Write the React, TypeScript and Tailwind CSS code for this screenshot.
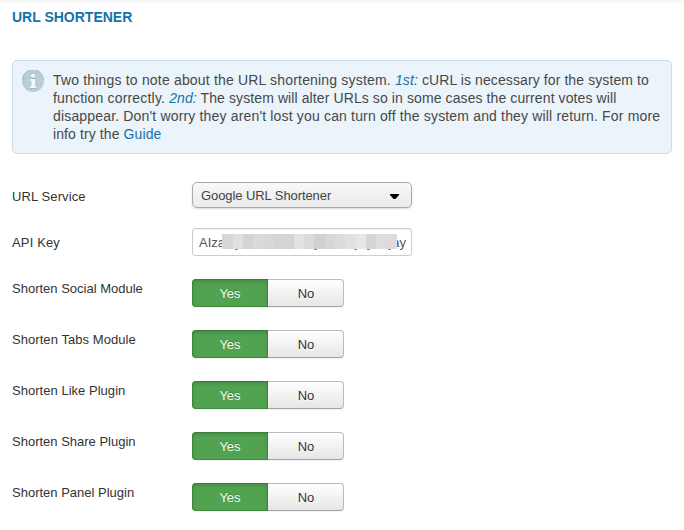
import type { ReactNode } from "react";

const noticeLink = "text-[#1372ab]";

const mosaic = [
  { w: "w-[11px]", c: "bg-[#d8d7d7]" },
  { w: "w-[10px]", c: "bg-[#dfe1e1]" },
  { w: "w-[10px]", c: "bg-[#d7d3d5]" },
  { w: "w-[10px]", c: "bg-[#dadadb]" },
  { w: "w-[10px]", c: "bg-[#d6d8da]" },
  { w: "w-[21px]", c: "bg-[#d3d4d4]" },
  { w: "w-[10px]", c: "bg-[#e2e2e3]" },
  { w: "w-[10px]", c: "bg-[#dcdada]" },
  { w: "w-[11px]", c: "bg-[#d0d1d4]" },
  { w: "w-[10px]", c: "bg-[#d8d7d8]" },
  { w: "w-[10px]", c: "bg-[#d9dce0]" },
  { w: "w-[11px]", c: "bg-[#e2e1e0]" },
  { w: "w-[10px]", c: "bg-[#e5e7ea]" },
  { w: "w-[10px]", c: "bg-[#d8d6d5]" },
  { w: "w-[11px]", c: "bg-[#dbdde1]" },
  { w: "w-[10px]", c: "bg-[#dedcdb]" },
];

const descenders = ["left-[13px]", "left-[92px]", "left-[132px]", "left-[145px]", "left-[166px]"];

const switches = [
  { label: "Shorten Social Module", tracking: "tracking-normal" },
  { label: "Shorten Tabs Module", tracking: "tracking-[0.06px]" },
  { label: "Shorten Like Plugin", tracking: "tracking-[0.03px]" },
  { label: "Shorten Share Plugin", tracking: "tracking-normal" },
  { label: "Shorten Panel Plugin", tracking: "tracking-normal" },
];

function Field({
  label,
  className,
  labelClass,
  children,
}: {
  label: string;
  className: string;
  labelClass: string;
  children: ReactNode;
}) {
  return (
    <div className={`flex items-start ${className}`}>
      <label className={`w-[180px] shrink-0 leading-[18px] whitespace-nowrap ${labelClass}`}>{label}</label>
      {children}
    </div>
  );
}

function YesNo() {
  return (
    <div className="flex h-7 w-[152px] rounded text-center shadow-[0_1px_2px_rgba(0,0,0,0.06)]">
      <button className="w-[76px] rounded-l-[4px] bg-[#51a351] pt-px leading-[28px] text-[#f4faf4] [text-shadow:0_-1px_0_rgba(0,0,0,0.2)] shadow-[inset_0_0_0_1px_rgba(30,90,30,0.3),inset_0_2px_4px_rgba(0,0,0,0.18)]">
        Yes
      </button>
      <button className="w-[76px] rounded-r-[4px] border border-l-0 border-[#bbb] border-b-[#a2a2a2] bg-linear-to-b from-white to-[#e6e6e6] pl-px leading-[27px] text-[#333] [text-shadow:0_1px_1px_rgba(255,255,255,0.75)]">
        No
      </button>
    </div>
  );
}

function Notice() {
  return (
    <div className="mt-[33px] flex h-[94px] rounded-[5px] border border-[#cfdce3] bg-[#ebf4fa] text-[14px] leading-[18px] text-[#484848]">
      <svg className="mt-[9px] ml-[9px] shrink-0" width="22" height="22" viewBox="0 0 22 22">
        <circle cx="11" cy="11" r="11" fill="#b9cdd9" />
        <path d="M.6 10A10.4 10.4 0 0 1 21.4 10" fill="none" stroke="#9db9c8" strokeWidth="1" />
        <path d="M9 3h4v1H9z M8 8h5v1H8z M8 18h6v1H8z" fill="#9db6c5" />
        <circle cx="11" cy="5.5" r="2" fill="#f1f8fc" />
        <path d="M8 9h5v7.5h1.3V18H7.7v-1.5H9.5v-6H8z" fill="#f1f8fc" />
      </svg>
      <p className="ml-[9px] pt-[10px] tracking-[0.1px] whitespace-nowrap">
        <span className="block">
          <span className="tracking-[0.18px]">Two things to note about the URL shortening system. </span>
          <em className={noticeLink}>1st:</em> cURL is necessary for the system to
        </span>
        <span className="block">
          <span className="tracking-[0.18px]">function correctly. </span>
          <em className={noticeLink}>2nd:</em> The system will alter URLs so in some cases the current votes will
        </span>
        <span className="block tracking-[0.165px]">
          disappear. Don't worry they aren't lost you can turn off the system and they will return. For more
        </span>
        <span className="block">
          info try the <a className={noticeLink}>Guide</a>
        </span>
      </p>
    </div>
  );
}

export default function App() {
  return (
    <main className="h-[530px] w-[684px] overflow-hidden bg-white bg-linear-to-b from-[#f4f4f4] to-white bg-[length:100%_4px] bg-no-repeat px-3 pt-2 font-['Liberation_Sans',Arial,sans-serif] text-[13px] text-[#333]">
      <h1 className="text-[14px] leading-[19px] font-bold text-[#1372ab]">URL SHORTENER</h1>
      <Notice />
      <Field label="URL Service" className="mt-7 h-[46px]" labelClass="pt-1.5 tracking-[0.1px]">
        <div className="flex h-[25.5px] w-[220px] items-center justify-between rounded-[5px] border border-[#a9a9a9] bg-linear-to-b from-[#fafafa] via-[#f0f0f0] to-[#ececec] pr-3 pl-2 text-[#444] shadow-[0_1px_2px_rgba(0,0,0,0.15)]">
          <span className="pt-[2px] tracking-[-0.08px]">Google URL Shortener</span>
          <svg className="mt-[3px]" width="9" height="5" viewBox="0 0 9 5">
            <path d="M0 0h9v1L5.5 5h-2L0 1z" fill="#000" />
          </svg>
        </div>
      </Field>
      <Field label="API Key" className="h-[51px]" labelClass="pt-1.5 tracking-[0.15px]">
        <div className="flex h-7 w-[220px] rounded-[3px] border border-[#ccc] pt-[5px] pl-1.5 leading-[18px] text-[#555] shadow-[inset_0_1px_1px_rgba(0,0,0,0.05)]">
          <span className="w-[23px] whitespace-nowrap">AIza</span>
          <span className="relative flex h-[15px]">
            {mosaic.map((m, i) => (
              <span key={i} className={`${m.w} ${m.c}`} />
            ))}
            {descenders.map((d) => (
              <span key={d} className={`absolute top-[15px] h-px w-[3px] bg-[#888] ${d}`} />
            ))}
          </span>
          <span className="-ml-[5px] w-[14px] text-right whitespace-nowrap">ay</span>
        </div>
      </Field>
      {switches.map(({ label, tracking }) => (
        <Field key={label} label={label} className="h-[51px]" labelClass={`pt-px ${tracking}`}>
          <YesNo />
        </Field>
      ))}
    </main>
  );
}
